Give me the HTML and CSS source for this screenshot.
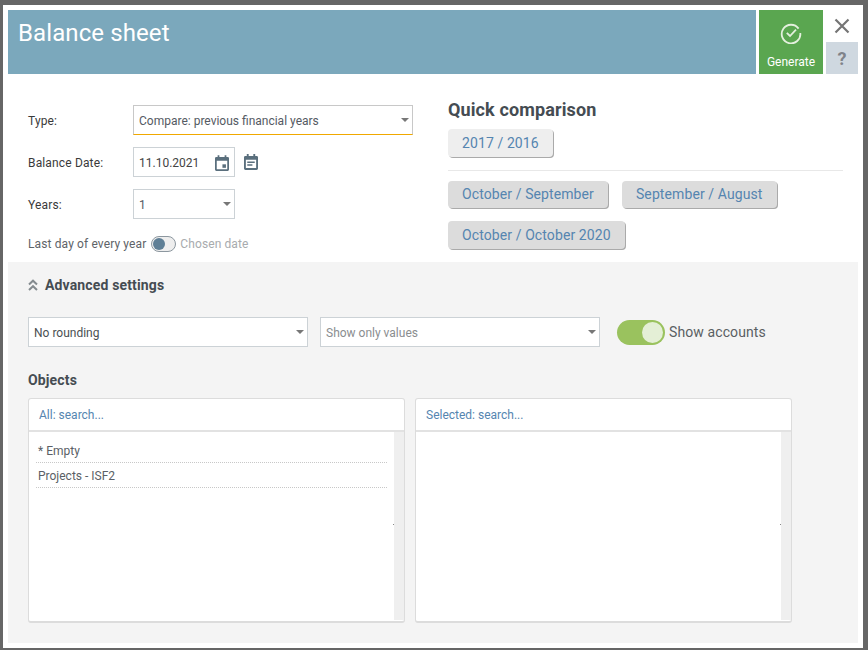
FILE: index.html
```html
<!DOCTYPE html>
<html lang="en">
<head>
<meta charset="utf-8">
<title>Balance sheet</title>
<link rel="stylesheet" href="styles.css">
</head>
<body>
<div class="window">
  <header class="top">
    <h1 class="title">Balance sheet</h1>
    <button class="generate">
      <svg class="gen-icon" width="22" height="22" viewBox="0 0 22 22" fill="none" stroke="#e4f0de" stroke-width="1.8"><path d="M18.6 6.6A9.3 9.3 0 1 0 20.3 11"/><path d="M6.8 10.8l3.2 3.2 6-6.4"/></svg>
      <span>Generate</span>
    </button>
    <div class="side">
      <div class="close"><svg width="16" height="16" viewBox="0 0 16 16" stroke="#757575" stroke-width="2.2" fill="none"><path d="M1.5 1.5l13 13M14.500 1.500l-13 13"/></svg></div>
      <div class="help">?</div>
    </div>
  </header>

  <section class="main">
    <div class="form">
      <div class="row row-type">
        <label class="lab">Type:</label>
        <div class="select wide focus"><span class="val">Compare: previous financial years</span><i class="caret"></i></div>
      </div>
      <div class="row">
        <label class="lab">Balance Date:</label>
        <div class="select short"><span class="val dark">11.10.2021</span>
          <svg class="cal" width="14" height="16" viewBox="0 0 16 18"><path fill="#5a6f7d" fill-rule="evenodd" d="M3 0h2v2h6V0h2v2h1.500A1.500 1.500 0 0 1 16 3.500v13a1.500 1.500 0 0 1-1.500 1.500h-13A1.500 1.500 0 0 1 0 16.500v-13A1.500 1.500 0 0 1 1.500 2H3zM2 6.500V16h12V6.500z"/><rect x="8.500" y="10.500" width="4" height="4" fill="#5a6f7d"/></svg>
        </div>
        <svg class="cal2" width="14" height="16" viewBox="0 0 15 17"><path fill="#5a6f7d" fill-rule="evenodd" d="M3 0h2v2h5V0h2v2h1.500A1.500 1.500 0 0 1 15 3.500v12a1.500 1.500 0 0 1-1.500 1.500h-12A1.500 1.500 0 0 1 0 15.500v-12A1.500 1.500 0 0 1 1.500 2H3zM2 6v9h11V6z"/><path fill="#5a6f7d" d="M3.500 8h8v1.500h-8zM3.500 11h5.500v1.500H3.500z"/></svg>
      </div>
      <div class="row">
        <label class="lab">Years:</label>
        <div class="select short"><span class="val">1</span><i class="caret"></i></div>
      </div>
      <div class="switch-row">
        <span>Last day of every year</span>
        <span class="mini"><i></i></span>
        <span class="muted">Chosen date</span>
      </div>
    </div>

    <div class="quick">
      <h2 class="quick-title">Quick comparison</h2>
      <div class="btns"><button class="chip light">2017 / 2016</button></div>
      <hr class="rule">
      <div class="btns">
        <button class="chip">October / September</button>
        <button class="chip">September / August</button>
        <button class="chip tall">October / October 2020</button>
      </div>
    </div>
  </section>

  <section class="advanced">
    <div class="adv-head">
      <svg width="10" height="12" viewBox="0 0 10 12" fill="none" stroke="#848b8f" stroke-width="2"><path d="M1 5.500l4-3.800 4 3.800M1 11l4-3.800L9 11"/></svg>
      <span class="adv-text">Advanced settings</span>
    </div>
    <div class="adv-row">
      <div class="select field"><span class="val dark2">No rounding</span><i class="caret"></i></div>
      <div class="select field"><span class="val grey">Show only values</span><i class="caret"></i></div>
      <span class="big-switch"><i></i></span>
      <span class="accounts">Show accounts</span>
    </div>
    <h3 class="objects">Objects</h3>
    <div class="lists">
      <div class="list">
        <div class="search">All: search...</div>
        <div class="list-body">
          <ul class="items"><li>* Empty</li><li>Projects - ISF2</li></ul>
          <div class="scroll"><i class="tick"></i></div>
        </div>
      </div>
      <div class="list">
        <div class="search">Selected: search...</div>
        <div class="list-body">
          <ul class="items"></ul>
          <div class="scroll"><i class="tick"></i></div>
        </div>
      </div>
    </div>
  </section>
</div>
</body>
</html>
```
FILE: styles.css
```css
* { box-sizing: border-box; }
html, body { margin: 0; height: 100%; }
body {
  background: #666;
  padding: 5px 5px 2px 3px;
  font-family: Roboto, "Liberation Sans", sans-serif;
  font-size: 12px;
  color: #4a4f52;
  overflow: hidden;
}
.window {
  background: #fff;
  width: 860px;
  height: 643px;
  padding: 5px;
  display: flex;
  flex-direction: column;
}
.top { display: flex; height: 64px; flex: none; }
.title {
  flex: none;
  width: 748px;
  margin: 0;
  padding: 8px 0 0 10px;
  background: #7ba8bc;
  color: #fff;
  font-size: 24px;
  font-weight: 400;
  line-height: 30px;
  letter-spacing: 0.1px;
}
.generate {
  width: 64px;
  margin-left: 3px;
  border: 0;
  padding: 12px 0 0;
  background: #5aa650;
  color: #fff;
  font: 12px Roboto, sans-serif;
  display: flex;
  flex-direction: column;
  align-items: center;
  gap: 11px;
}
.gen-icon { display: block; }
.side { width: 32px; margin-left: 3px; display: flex; flex-direction: column; }
.close { height: 32px; display: flex; justify-content: center; align-items: flex-start; padding-top: 8px; }
.help {
  height: 32px;
  background: #cfd8e0;
  color: #7f8389;
  font-size: 18px;
  font-weight: 700;
  text-align: center;
  line-height: 33px;
}
.main { display: flex; height: 188px; flex: none; }
.form { width: 440px; padding: 31px 0 0 20px; }
.row { display: flex; align-items: center; height: 30px; margin-bottom: 12px; }
.lab { width: 105px; color: #3a3a3a; padding-top: 2px; letter-spacing: 0.15px; }
.select {
  height: 30px;
  border: 1px solid #ccd2d6;
  background: #fff;
  display: flex;
  align-items: center;
  padding: 0 5px;
  position: relative;
  color: #555a63;
}
.val { padding-top: 2px; }
.wide { width: 280px; }
.short { width: 102px; }
.focus { border-color: #c8c8c8; border-bottom-color: #f0a800; }
.dark { color: #444; }
.dark2 { color: #4a4f52; }
.grey { color: #8a8d8f; }
.caret {
  position: absolute;
  right: 3px;
  top: 12px;
  border-left: 4px solid transparent;
  border-right: 4px solid transparent;
  border-top: 4px solid #777;
  width: 0;
  height: 0;
}
.cal { position: absolute; right: 5px; top: 7px; }
.cal2 { margin-left: 9px; }
.switch-row { display: flex; align-items: center; height: 20px; margin-top: 15px; color: #5e6368; letter-spacing: 0.12px; }
.muted { color: #a8abae; letter-spacing: 0.1px; }
.mini {
  width: 25px;
  height: 16px;
  margin: 0 4px 0 5px;
  border: 1px solid #8c979f;
  border-radius: 8px;
  background: #eee;
  display: block;
  padding: 1px;
}
.mini i { display: block; width: 12px; height: 12px; border-radius: 50%; background: #5f7f96; }
.quick { width: 395px; padding-top: 25px; }
.quick-title { margin: 0 0 9px; font-size: 18px; font-weight: 700; line-height: 21px; color: #454c52; letter-spacing: 0.12px; }
.btns { display: flex; flex-wrap: wrap; align-items: flex-start; gap: 13px 14px; }
.chip {
  height: 27px;
  padding: 0 14px;
  border: 0;
  border-radius: 4px;
  background: #dcdcdc;
  box-shadow: 1px 1px 0 #aaa;
  color: #5585b0;
  font: 14px/27px Roboto, sans-serif;
  letter-spacing: 0.1px;
}
.chip.light { background: #eeeeee; height: 28px; padding-top: 1px; }
.chip.tall { height: 28px; padding-top: 1px; }
.rule { border: 0; border-top: 1px solid #e8e8e8; margin: 13px 0 10px; }
.advanced { flex: 1; background: #f4f4f4; padding: 0 20px; }
.adv-head { display: flex; align-items: center; gap: 7px; height: 46px; font-size: 14px; font-weight: 700; color: #454c52; }
.adv-text { letter-spacing: 0.15px; }
.adv-row { display: flex; align-items: center; margin-top: 9px; height: 30px; }
.field { width: 280px; margin-right: 12px; }
.big-switch {
  width: 48px;
  height: 25px;
  margin-left: 5px;
  border-radius: 13px;
  background: #9ac25e;
  padding: 2px;
  display: flex;
  justify-content: flex-end;
}
.big-switch i { display: block; width: 21px; height: 21px; border-radius: 50%; background: #e4efd6; }
.accounts { margin-left: 4px; font-size: 14px; color: #5a5f63; letter-spacing: 0.1px; }
.objects { margin: 25px 0 10px; font-size: 14px; font-weight: 700; line-height: 16px; color: #454c52; letter-spacing: 0.15px; }
.lists { display: flex; gap: 10px; }
.list {
  width: 377px;
  height: 225px;
  border: 1px solid #dcdcdc;
  border-bottom-width: 2px;
  border-radius: 3px;
  background: #fff;
  display: flex;
  flex-direction: column;
}
.search {
  height: 33px;
  flex: none;
  padding-left: 10px;
  line-height: 33px;
  color: #5585b0;
  border-bottom: 2px solid #e2e2e2;
}
.list-body { flex: 1; display: flex; min-height: 0; padding-bottom: 1px; }
.items { flex: 1; list-style: none; margin: 0; padding: 6px 7px 0; }
.items li { height: 25px; line-height: 27px; padding-left: 2px; border-bottom: 1px dotted #c8c8c8; color: #5a5f66; }
.scroll { width: 10px; background: #efefef; position: relative; }
.tick { position: absolute; left: -1px; top: 92px; width: 1px; height: 1px; background: #888; }
```
